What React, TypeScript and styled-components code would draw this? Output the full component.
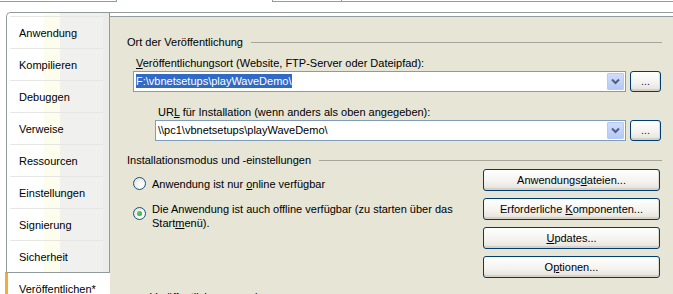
import React from "react";
import styled, { createGlobalStyle } from "styled-components";

const GlobalStyle = createGlobalStyle`
  html, body {
    margin: 0;
    padding: 0;
    background: #ffffff;
  }
  body {
    font-family: "Liberation Sans", Arial, sans-serif;
    font-size: 11px;
    color: #000;
  }
`;

const tabs = [
  "Anwendung",
  "Kompilieren",
  "Debuggen",
  "Verweise",
  "Ressourcen",
  "Einstellungen",
  "Signierung",
  "Sicherheit",
];

export default function App() {
  return (
    <>
      <GlobalStyle />
      <Window>
        <TopStrip>
          <CutBox $width={117} $side="right" />
          <StripGap />
          <CutBox $width={68} $side="left" />
          <CutBox $width={333} $side="left" />
        </TopStrip>

        <TabControl>
          <TabList>
            {tabs.map((t) => (
              <Tab key={t}>{t}</Tab>
            ))}
            <Tab $active>Veröffentlichen*</Tab>
          </TabList>

          <Page>
            <GroupHeader>
              Ort der Veröffentlichung
              <Rule />
            </GroupHeader>

            <FieldLabel $indent={9}>
              <u>V</u>eröffentlichungsort (Website, FTP-Server oder Dateipfad):
            </FieldLabel>
            <ComboRow $indent={6}>
              <Combo>
                <ComboText>
                  <Selected>F:\vbnetsetups\playWaveDemo\</Selected>
                </ComboText>
                <DropButton>
                  <Chevron />
                </DropButton>
              </Combo>
              <DotsButton>...</DotsButton>
            </ComboRow>

            <FieldLabel $indent={31} $top={14}>
              UR<u>L</u> für Installation (wenn anders als oben angegeben):
            </FieldLabel>
            <ComboRow $indent={28}>
              <Combo>
                <ComboText>\\pc1\vbnetsetups\playWaveDemo\</ComboText>
                <DropButton>
                  <Chevron />
                </DropButton>
              </Combo>
              <DotsButton>...</DotsButton>
            </ComboRow>

            <GroupHeader $top={13}>
              Installationsmodus und -einstellungen
              <Rule />
            </GroupHeader>

            <ModeSection>
              <RadioList>
                <RadioRow $top={11}>
                  <RadioCircle />
                  <RadioLabel>
                    Anwendung ist nur <u>o</u>nline verfügbar
                  </RadioLabel>
                </RadioRow>
                <RadioRow $top={11}>
                  <RadioCircle $checked $offset={5} />
                  <RadioLabel>
                    Die Anwendung ist auch offline verfügbar (zu starten über das
                    <br />
                    Start<u>m</u>enü).
                  </RadioLabel>
                </RadioRow>
              </RadioList>

              <ButtonColumn>
                <PushButton>
                  <span>
                    Anwendungs<u>d</u>ateien...
                  </span>
                </PushButton>
                <PushButton>
                  <span>
                    Erforderliche <u>K</u>omponenten...
                  </span>
                </PushButton>
                <PushButton>
                  <span>
                    <u>U</u>pdates...
                  </span>
                </PushButton>
                <PushButton>
                  <span>
                    O<u>p</u>tionen...
                  </span>
                </PushButton>
              </ButtonColumn>
            </ModeSection>

            <CutLabel>Veröffentlichungsversion</CutLabel>
          </Page>
        </TabControl>
      </Window>
    </>
  );
}

function Chevron() {
  return (
    <svg width="9" height="7" viewBox="0 0 9 7">
      <path
        d="M1 1.5 L4.5 5 L8 1.5"
        fill="none"
        stroke="#4d6185"
        strokeWidth="2"
      />
    </svg>
  );
}

const Window = styled.div`
  width: 673px;
  height: 294px;
  overflow: hidden;
  display: flex;
  flex-direction: column;
  background: #ffffff;
`;

const TopStrip = styled.div`
  height: 12px;
  display: flex;
  align-items: flex-start;
`;

const StripGap = styled.div`
  width: 155px;
`;

const CutBox = styled.div<{ $width: number; $side: "left" | "right" }>`
  width: ${(p) => p.$width}px;
  height: 1px;
  border-bottom: 1px solid #8d9bb0;
  ${(p) =>
    p.$side === "right"
      ? "border-right: 1px solid #8d9bb0;"
      : "border-left: 1px solid #8d9bb0;"}
`;

const TabControl = styled.div`
  flex: 1;
  display: flex;
  margin-left: 6px;
  border-top: 1px solid #919b9c;
  border-left: 1px solid #919b9c;
  border-top-left-radius: 5px;
  min-height: 0;
`;

const TabList = styled.div`
  width: 102px;
  flex-shrink: 0;
  padding-top: 3px;
  border-right: 1px solid #919b9c;
  background: linear-gradient(
    to right,
    #ffffff 0 37px,
    #fdfdee 37px 53px,
    #f0f0ef 53px 96px,
    #ececea 96px
  );
  border-top-left-radius: 5px;
`;

const Tab = styled.div<{ $active?: boolean }>`
  position: relative;
  height: 31px;
  display: flex;
  align-items: center;
  padding-left: 9px;
  border-top: 1px solid #e6e6e2;
  margin: 0 6px 0 3px;
  color: #000;
  white-space: nowrap;

  ${(p) =>
    p.$active &&
    `
    margin: 0 -1px 0 -2px;
    padding-left: 11px;
    height: 31px;
    background: #ffffff;
    border-top: 1px solid #919b9c;
    border-left: 3px solid #f4ab3b;
    z-index: 1;
  `}
`;

const Page = styled.div`
  flex: 1;
  margin-top: 3px;
  border-top: 1px solid #919b9c;
  background: #e6e5d6;
  padding: 19px 11px 0 17px;
  display: flex;
  flex-direction: column;
  min-width: 0;
`;

const GroupHeader = styled.div<{ $top?: number }>`
  display: flex;
  align-items: center;
  gap: 8px;
  height: 13px;
  margin-top: ${(p) => p.$top ?? 0}px;
  white-space: nowrap;
`;

const Rule = styled.div`
  flex: 1;
  height: 1px;
  background: #a7a69a;
`;

const FieldLabel = styled.div<{ $indent: number; $top?: number }>`
  margin: ${(p) => p.$top ?? 9}px 0 1px ${(p) => p.$indent}px;
  height: 13px;
  line-height: 13px;
  white-space: nowrap;
`;

const ComboRow = styled.div<{ $indent: number }>`
  display: flex;
  gap: 4px;
  margin-left: ${(p) => p.$indent}px;
  margin-right: 1px;
`;

const Combo = styled.div`
  flex: 1;
  height: 19px;
  border: 1px solid #7f9db9;
  background: #ffffff;
  display: flex;
  align-items: center;
  padding: 0 1px 0 2px;
`;

const ComboText = styled.div`
  flex: 1;
  white-space: nowrap;
  overflow: hidden;
  line-height: 15px;
`;

const Selected = styled.span`
  background: #316ac5;
  color: #ffffff;
  padding: 1px 0;
`;

const DropButton = styled.div`
  width: 15px;
  height: 15px;
  border: 1px solid #b8c9f3;
  border-radius: 1px;
  background: linear-gradient(#d0dcfb, #b6c9f6);
  display: flex;
  align-items: center;
  justify-content: center;
`;

const xpButton = `
  border: 1px solid #003c74;
  border-radius: 3px;
  background: linear-gradient(#ffffff 0%, #f3f2ee 60%, #e4e1d8 100%);
  box-shadow: inset 0 -2px 0 #d6d0c5, inset -1px 0 0 #e0dcd2;
  display: flex;
  align-items: center;
  justify-content: center;
  white-space: nowrap;
  box-sizing: border-box;
  color: #000;
`;

const DotsButton = styled.div`
  ${xpButton}
  width: 31px;
  height: 21px;
  color: #1a1a6e;
  font-size: 11px;
  padding-bottom: 1px;
`;

const ModeSection = styled.div`
  display: flex;
  justify-content: space-between;
  margin-right: 2px;
`;

const RadioList = styled.div`
  display: flex;
  flex-direction: column;
  padding-left: 6px;
`;

const RadioRow = styled.div<{ $top: number }>`
  display: flex;
  align-items: flex-start;
  gap: 6px;
  margin-top: ${(p) => p.$top}px;
  line-height: 14px;
`;

const RadioCircle = styled.div<{ $checked?: boolean; $offset?: number }>`
  width: 11px;
  height: 11px;
  flex-shrink: 0;
  margin-top: ${(p) => p.$offset ?? 0}px;
  border: 1px solid #1c5180;
  border-radius: 50%;
  background: radial-gradient(circle at 65% 65%, #ffffff 0%, #f4f3ee 45%, #d8d7cf 100%);
  display: flex;
  align-items: center;
  justify-content: center;

  &::after {
    content: "";
    display: ${(p) => (p.$checked ? "block" : "none")};
    width: 5px;
    height: 5px;
    border-radius: 50%;
    background: radial-gradient(circle at 40% 40%, #5fd35f, #21a121);
  }
`;

const RadioLabel = styled.div`
  white-space: nowrap;
`;

const ButtonColumn = styled.div`
  display: flex;
  flex-direction: column;
  gap: 7px;
  margin-top: 3px;
`;

const PushButton = styled.div`
  ${xpButton}
  width: 177px;
  height: 22px;
`;

const CutLabel = styled.div`
  margin: 13px 0 0 23px;
  line-height: 13px;
  white-space: nowrap;
`;
